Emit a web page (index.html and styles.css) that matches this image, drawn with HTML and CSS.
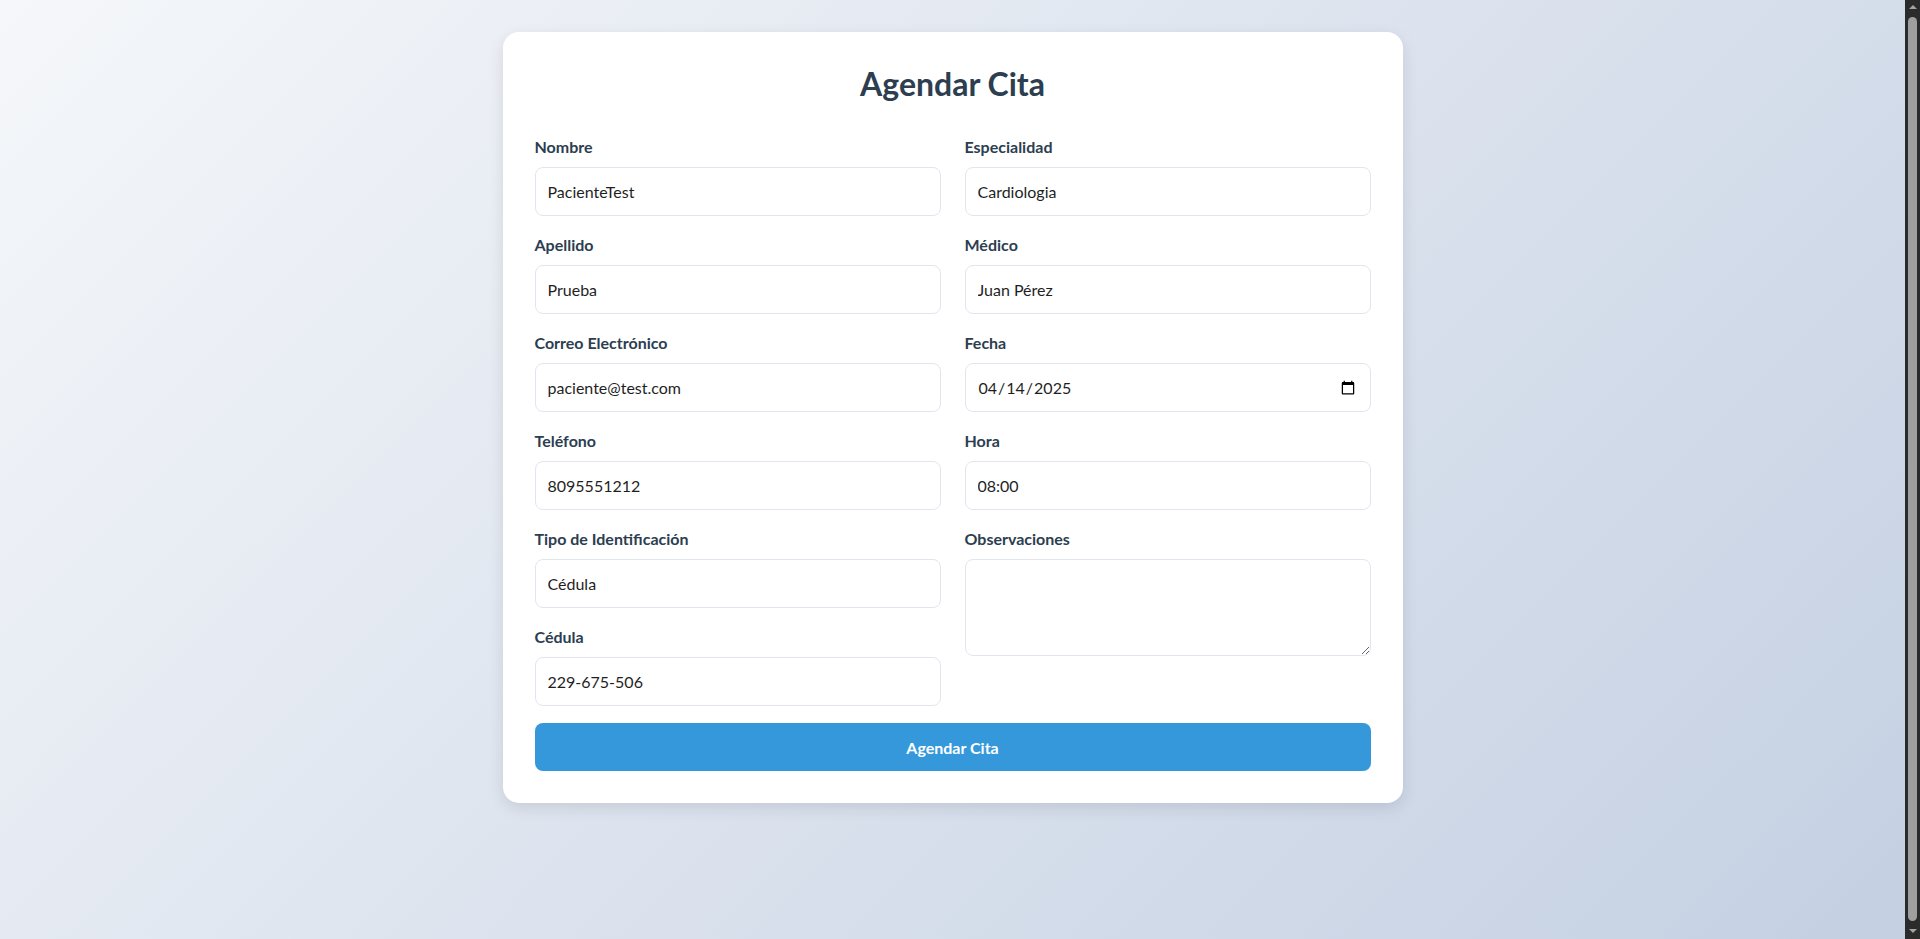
FILE: index.html
```html
<!DOCTYPE html>
<html lang="es">
<head>
<meta charset="utf-8">
<title>Agendar Cita</title>
<link rel="stylesheet" href="styles.css">
</head>
<body>
<main class="card">
  <h2 class="title">Agendar Cita</h2>
  <form class="form">
    <div class="columns">
      <div class="col">
        <div class="group">
          <label class="label" for="nombre">Nombre</label>
          <input class="field" id="nombre" type="text" value="PacienteTest">
        </div>
        <div class="group">
          <label class="label" for="apellido">Apellido</label>
          <input class="field" id="apellido" type="text" value="Prueba">
        </div>
        <div class="group">
          <label class="label" for="correo">Correo Electrónico</label>
          <input class="field" id="correo" type="email" value="paciente@test.com">
        </div>
        <div class="group">
          <label class="label" for="telefono">Teléfono</label>
          <input class="field" id="telefono" type="tel" value="8095551212">
        </div>
        <div class="group">
          <label class="label" for="tipo">Tipo de Identificación</label>
          <select class="field" id="tipo"><option>Cédula</option></select>
        </div>
        <div class="group">
          <label class="label" for="cedula">Cédula</label>
          <input class="field" id="cedula" type="text" value="229-675-506">
        </div>
      </div>
      <div class="col">
        <div class="group">
          <label class="label" for="especialidad">Especialidad</label>
          <select class="field" id="especialidad"><option>Cardiologia</option></select>
        </div>
        <div class="group">
          <label class="label" for="medico">Médico</label>
          <select class="field" id="medico"><option>Juan Pérez</option></select>
        </div>
        <div class="group">
          <label class="label" for="fecha">Fecha</label>
          <input class="field" id="fecha" type="date" value="2025-04-14">
        </div>
        <div class="group">
          <label class="label" for="hora">Hora</label>
          <select class="field" id="hora"><option>08:00</option></select>
        </div>
        <div class="group">
          <label class="label" for="obs">Observaciones</label>
          <textarea class="field area" id="obs"></textarea>
        </div>
      </div>
    </div>
    <button class="submit" type="button">Agendar Cita</button>
  </form>
</main>
<div class="scrollbar" aria-hidden="true">
  <span class="arrow arrow-up"></span>
  <span class="thumb"></span>
  <span class="arrow arrow-down"></span>
</div>
</body>
</html>
```
FILE: styles.css
```css
body {
  margin: 0;
  padding: 20px 35px 20px 20px;
  min-height: 100vh;
  font-family: Lato, "Noto Sans", sans-serif;
  background: linear-gradient(135deg, #f5f7fa 0%, #c3cfe2 100%);
  color: #2c3e50;
}

.card {
  max-width: 900px;
  box-sizing: border-box;
  margin: 12px auto 0;
  padding: 33px 32px 32px;
  background: #ffffff;
  border-radius: 16px;
  box-shadow: 0 5px 15px rgba(0, 0, 0, 0.1);
}

.title {
  margin: 0 0 33px;
  font-size: 32px;
  line-height: 38px;
  font-weight: 700;
  text-align: center;
  color: #2c3e50;
}

.form {
  display: flex;
  flex-direction: column;
  gap: 17px;
}

.columns {
  display: grid;
  grid-template-columns: 1fr 1fr;
  column-gap: 24px;
  align-items: start;
}

.col {
  display: flex;
  flex-direction: column;
  gap: 18px;
}

.group {
  display: flex;
  flex-direction: column;
}

.label {
  display: block;
  margin-bottom: 9px;
  font-size: 16px;
  line-height: 22px;
  font-weight: 700;
  color: #2c3e50;
}

.field {
  box-sizing: border-box;
  width: 100%;
  height: 49px;
  margin: 0;
  padding: 0 12px;
  border: 1px solid #e1e6ee;
  border-radius: 8px;
  background: #ffffff;
  font-family: Lato, "Noto Sans", sans-serif;
  font-size: 16px;
  color: #1f1f1f;
  outline: none;
}

select.field {
  appearance: none;
  -webkit-appearance: none;
}

.area {
  height: 97px;
  padding: 12px;
  resize: vertical;
}

.submit {
  height: 48px;
  width: 100%;
  border: none;
  border-radius: 8px;
  background: #3498db;
  color: #ffffff;
  font-family: Lato, "Noto Sans", sans-serif;
  font-size: 16px;
  font-weight: 700;
  cursor: pointer;
}

/* imitation of the browser's dark scrollbar on the right edge */
.scrollbar {
  position: fixed;
  top: 0;
  right: 0;
  width: 15px;
  height: 100vh;
  box-sizing: border-box;
  padding: 5px 0 6px;
  background: #2b2b2b;
  display: flex;
  flex-direction: column;
  align-items: center;
}

.thumb {
  flex: 1;
  width: 9px;
  margin: 8px 0 8px;
  border-radius: 5px;
  background: #9f9f9f;
}

.arrow {
  width: 0;
  height: 0;
  border-left: 4px solid transparent;
  border-right: 4px solid transparent;
}

.arrow-up {
  border-bottom: 4px solid #a3a3a3;
}

.arrow-down {
  border-top: 4px solid #a3a3a3;
}
```
